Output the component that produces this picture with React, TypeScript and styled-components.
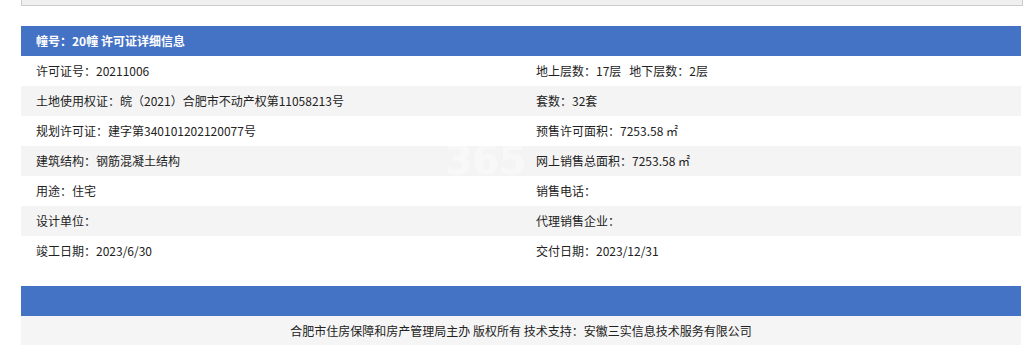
import React from "react";
import styled, { createGlobalStyle } from "styled-components";

const Global = createGlobalStyle`
  html, body { margin: 0; padding: 0; background: #fff; }
  body {
    font-family: "Noto Sans CJK SC", "Noto Sans", sans-serif;
    font-size: 12px;
    color: #333;
  }
`;

const Page = styled.div`
  width: 1002px;
  padding-left: 21px;
  display: flex;
  flex-direction: column;
`;

const TopBox = styled.div`
  height: 5px;
  background: #f0f0f0;
  border: 1px solid #cccccc;
  border-top: none;
`;

const Section = styled.div`
  width: 1000px;
  margin-top: 20px;
  position: relative;
`;

const Header = styled.div`
  height: 30px;
  line-height: 30px;
  background: #4472c4;
  color: #fff;
  font-weight: bold;
  padding-left: 15px;
`;

const Row = styled.div<{ $alt?: boolean }>`
  display: grid;
  grid-template-columns: 500px 500px;
  height: 30px;
  line-height: 30px;
  background: ${(p) => (p.$alt ? "#f4f4f4" : "#ffffff")};
`;

const Cell = styled.div`
  padding-left: 15px;
  white-space: nowrap;
  color: #222;
`;

const Gap = styled.span`
  display: inline-block;
  width: 8px;
`;

const Spacer = styled.div`
  height: 20px;
`;

const FooterBar = styled.div`
  width: 1000px;
  height: 30px;
  background: #4472c4;
`;

const FooterText = styled.div`
  width: 1000px;
  height: 30px;
  line-height: 30px;
  background: #f5f5f5;
  text-align: center;
  color: #222;
`;

const Watermark = styled.div`
  position: absolute;
  left: 424px;
  top: 114px;
  font-family: "DejaVu Sans", sans-serif;
  font-weight: bold;
  font-size: 40px;
  line-height: 40px;
  color: rgba(255, 255, 255, 0.45);
  letter-spacing: -1px;
  pointer-events: none;
  white-space: nowrap;
`;

const rows: [React.ReactNode, React.ReactNode][] = [
  [
    "许可证号：20211006",
    <>
      地上层数：17层
      <Gap />
      地下层数：2层
    </>,
  ],
  ["土地使用权证：皖（2021）合肥市不动产权第11058213号", "套数：32套"],
  ["规划许可证：建字第340101202120077号", "预售许可面积：7253.58 ㎡"],
  ["建筑结构：钢筋混凝土结构", "网上销售总面积：7253.58 ㎡"],
  ["用途：住宅", "销售电话："],
  ["设计单位：", "代理销售企业："],
  ["竣工日期：2023/6/30", "交付日期：2023/12/31"],
];

export default function App() {
  return (
    <>
      <Global />
      <Page>
        <TopBox />
        <Section>
          <Header>幢号：20幢 许可证详细信息</Header>
          {rows.map(([a, b], i) => (
            <Row key={i} $alt={i % 2 === 1}>
              <Cell>{a}</Cell>
              <Cell>{b}</Cell>
            </Row>
          ))}
          <Watermark aria-hidden="true">365</Watermark>
        </Section>
        <Spacer />
        <FooterBar />
        <FooterText>
          合肥市住房保障和房产管理局主办 版权所有 技术支持：安徽三实信息技术服务有限公司
        </FooterText>
      </Page>
    </>
  );
}
